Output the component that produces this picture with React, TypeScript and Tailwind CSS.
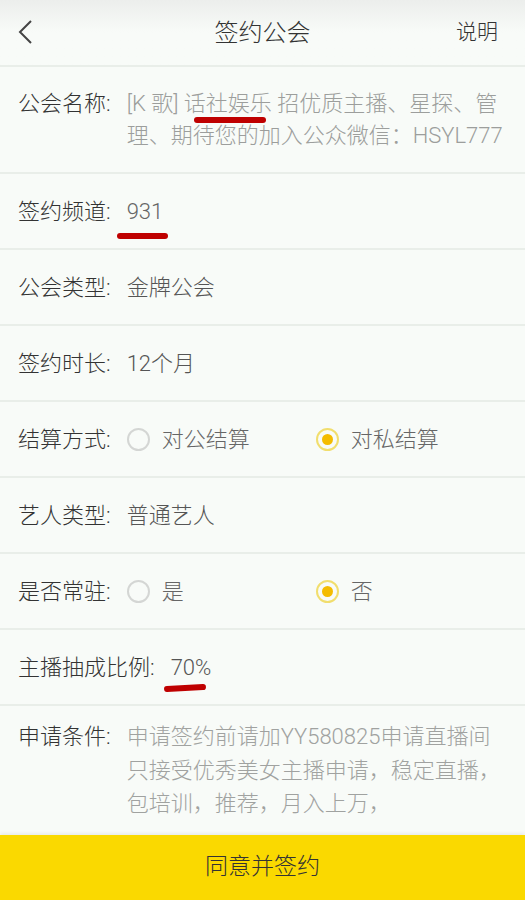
import React from 'react';

const font = { fontFamily: 'Roboto, "Noto Sans CJK SC", "Noto Sans", sans-serif' };

function Divider() {
    return <div className="h-[2px] bg-[#e9eee9]" />;
}

function Mark({ className }: { className: string }) {
    // red hand-drawn underline from the screenshot
    return <div className={`absolute h-[6px] rounded-full bg-[#bf0000] ${className}`} />;
}

function Radio({ checked, label }: { checked?: boolean; label: string }) {
    return (
        <div className="flex items-center w-[189px]">
            {checked ? (
                <div className="w-[23px] h-[23px] rounded-full border-2 border-[#f1de6e] flex items-center justify-center">
                    <div className="w-[11px] h-[11px] rounded-full bg-[#f4bc00]" />
                </div>
            ) : (
                <div className="w-[23px] h-[23px] rounded-full border-2 border-[#d4d6d4]" />
            )}
            <span className="ml-[12px] text-[#666]">{label}</span>
        </div>
    );
}

function Row({ label, children }: { label: string; children: React.ReactNode }) {
    return (
        <div className="relative flex items-center h-[74px] px-[18px]">
            <span className="text-[#333] shrink-0">{label}</span>
            <div className="ml-[16px] flex items-center">{children}</div>
        </div>
    );
}

export default function App() {
    return (
        <div className="w-[525px] h-[900px] flex flex-col bg-[#f8fbf8] text-[22px] font-light overflow-hidden" style={font}>
            {/* Header */}
            <div className="relative h-[65px] flex items-center justify-center shrink-0 bg-gradient-to-b from-[#eceeec] via-[#f8fbf8] to-[#f8fbf8]">
                <svg className="absolute left-[16px] top-[19px]" width="20" height="26" viewBox="0 0 20 26">
                    <polyline points="15,2 4,13 15,24" fill="none" stroke="#444" strokeWidth="2" />
                </svg>
                <span className="text-[24px] text-[#333]">签约公会</span>
                <span className="absolute right-[27px] text-[21px] text-[#333]">说明</span>
            </div>
            <Divider />

            <div className="flex-1 overflow-hidden">
                {/* 公会名称 */}
                <div className="relative flex px-[18px] pt-[21px] pb-[20px] leading-[32px]">
                    <span className="text-[#333] shrink-0">公会名称:</span>
                    <div className="ml-[16px] text-[#9c9e9c] whitespace-nowrap">
                        <div>[K 歌] 话社娱乐 招优质主播、星探、管</div>
                        <div>理、期待您的加入公众微信：HSYL777</div>
                    </div>
                    <Mark className="left-[194px] top-[50px] w-[72px]" />
                </div>
                <Divider />

                <Row label="签约频道:">
                    <span className="text-[#666]">931</span>
                    <Mark className="left-[117px] top-[59px] w-[51px]" />
                </Row>
                <Divider />

                <Row label="公会类型:">
                    <span className="text-[#555]">金牌公会</span>
                </Row>
                <Divider />

                <Row label="签约时长:">
                    <span className="text-[#555]">12个月</span>
                </Row>
                <Divider />

                <Row label="结算方式:">
                    <Radio label="对公结算" />
                    <Radio label="对私结算" checked />
                </Row>
                <Divider />

                <Row label="艺人类型:">
                    <span className="text-[#555]">普通艺人</span>
                </Row>
                <Divider />

                <Row label="是否常驻:">
                    <Radio label="是" />
                    <Radio label="否" checked />
                </Row>
                <Divider />

                <Row label="主播抽成比例:">
                    <span className="text-[#555]">70%</span>
                    <Mark className="left-[164px] top-[55px] w-[42px] -rotate-3" />
                </Row>
                <Divider />

                {/* 申请条件 */}
                <div className="flex px-[18px] pt-[14px] leading-[33.5px]">
                    <span className="text-[#333] shrink-0">申请条件:</span>
                    <div className="ml-[16px] text-[#a0a2a0] whitespace-nowrap">
                        <div>申请签约前请加YY580825申请直播间</div>
                        <div>只接受优秀美女主播申请，稳定直播，</div>
                        <div>包培训，推荐，月入上万，</div>
                    </div>
                </div>
            </div>

            {/* Bottom action */}
            <button className="h-[65px] shrink-0 bg-[#fad900] text-[23px] text-[#333] flex items-center justify-center shadow-[0_-2px_3px_rgba(0,0,0,0.06)]">
                同意并签约
            </button>
        </div>
    );
}
